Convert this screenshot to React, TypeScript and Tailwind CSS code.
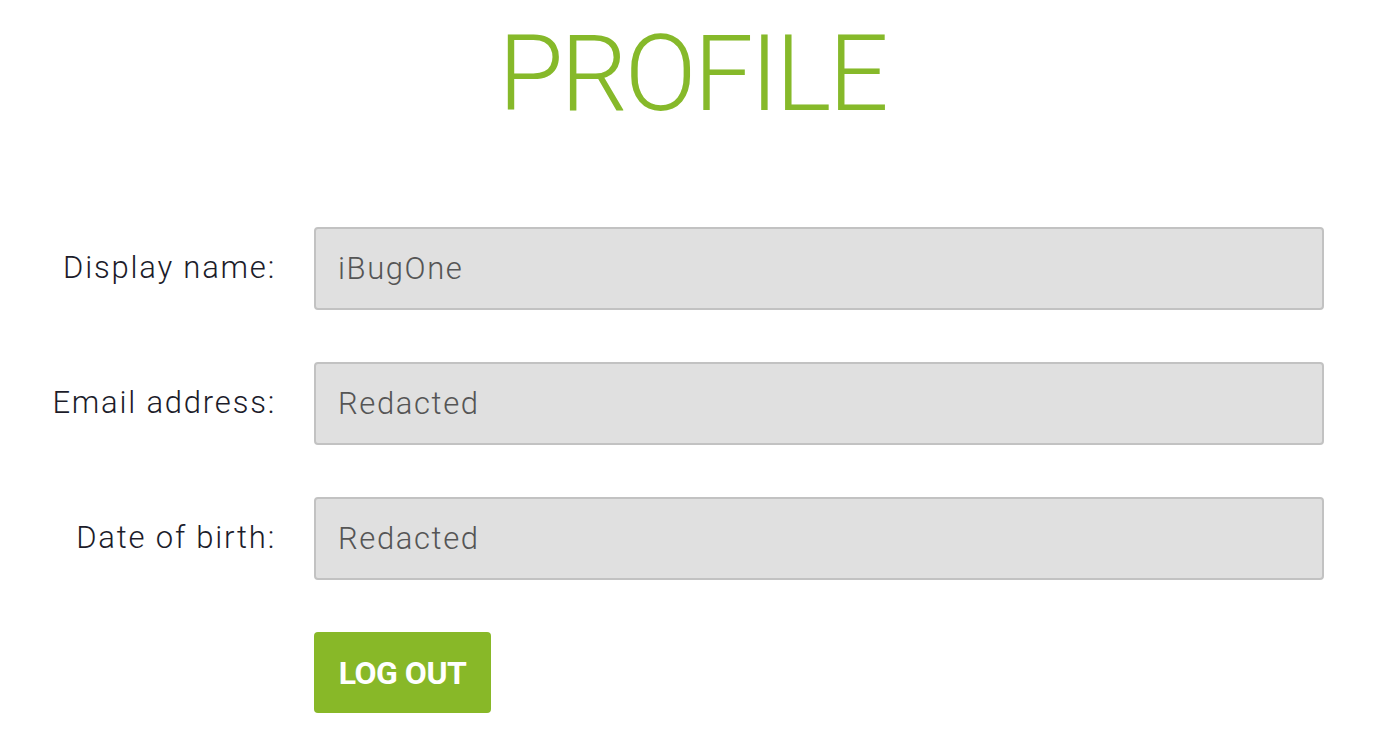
import { useState } from 'react';

const fields = [
    { label: 'Display name:', value: 'iBugOne' },
    { label: 'Email address:', value: 'Redacted' },
    { label: 'Date of birth:', value: 'Redacted' },
];

const Profile = () => {
    const [values] = useState(fields);

    return (
        <div className="min-h-[755px] bg-white font-['Roboto',sans-serif]">
            {/* Title */}
            <h1 className="pt-[14px] pl-[10px] text-center text-[106px] leading-[120px] font-light tracking-[-3px] text-[#86b92a]">
                PROFILE
            </h1>

            {/* Form */}
            <div className="mt-[93px] flex flex-col gap-[52px] pl-[48px] pr-[50px]">
                {values.map(f => (
                    <div key={f.label} className="flex items-center">
                        <label className="w-[228px] shrink-0 text-right text-[31px] font-light tracking-[1.8px] text-[#1c1c2a]">
                            {f.label}
                        </label>
                        <input
                            readOnly
                            value={f.value}
                            className="ml-[38px] h-[83px] flex-1 rounded-[4px] border-2 border-[#c2c2c2] bg-[#e0e0e0] px-[22px] text-[31px] font-light tracking-[1.6px] text-[#555555] outline-none"
                        />
                    </div>
                ))}

                <div className="pl-[266px]">
                    <button className="h-[81px] w-[177px] rounded-[4px] bg-[#88b828] text-[32px] font-bold tracking-[-0.5px] text-white">
                        LOG OUT
                    </button>
                </div>
            </div>
        </div>
    );
};

export default Profile;
